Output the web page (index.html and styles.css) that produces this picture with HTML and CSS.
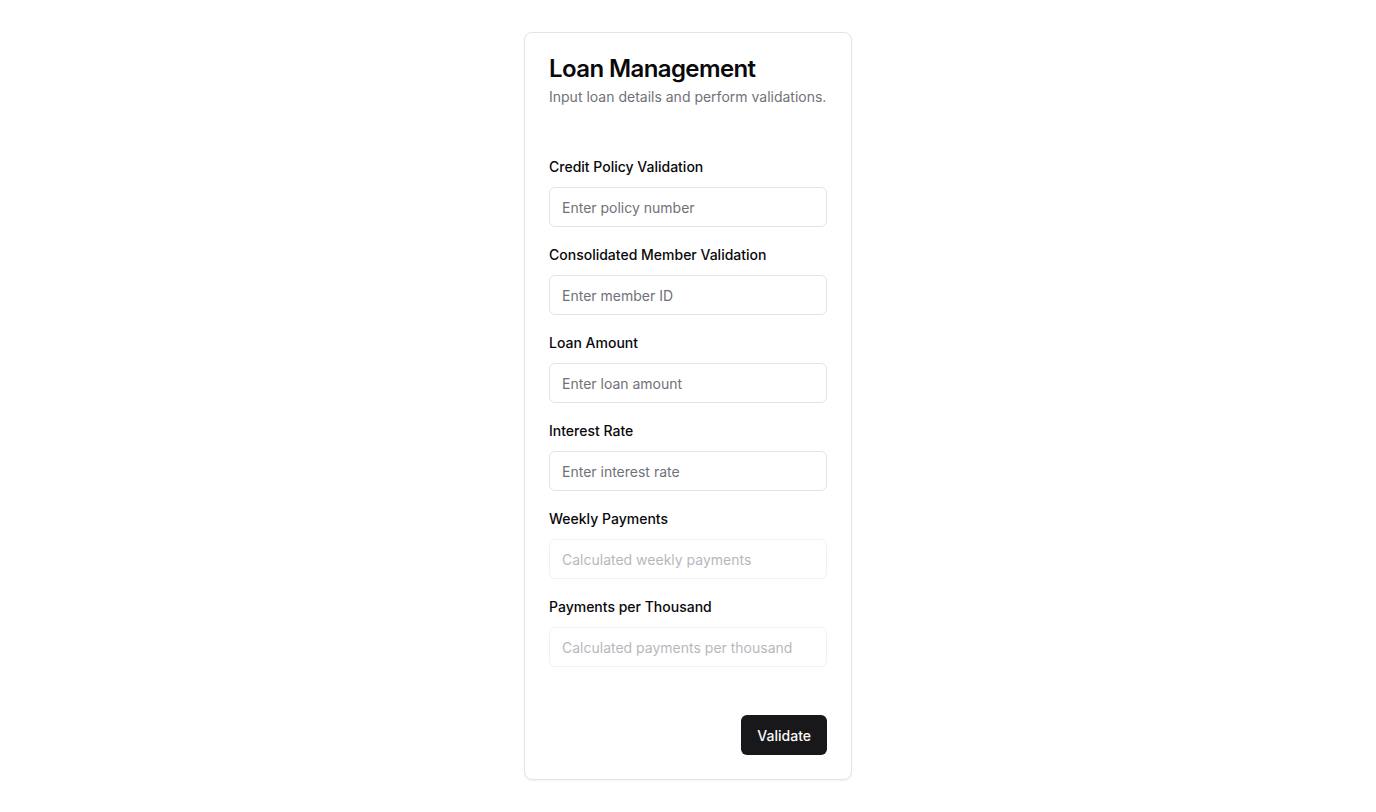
FILE: index.html
```html
<!DOCTYPE html>
<html lang="en">
<head>
<meta charset="utf-8">
<title>Loan Management</title>
<link rel="stylesheet" href="styles.css">
</head>
<body>
<main class="page">
  <section class="card">
    <header class="card-header">
      <h1 class="card-title">Loan Management</h1>
      <p class="card-desc">Input loan details and perform validations.</p>
    </header>
    <div class="card-content">
      <div class="field">
        <label class="label" for="policy">Credit Policy Validation</label>
        <input class="input" id="policy" type="text" placeholder="Enter policy number">
      </div>
      <div class="field">
        <label class="label" for="member">Consolidated Member Validation</label>
        <input class="input" id="member" type="text" placeholder="Enter member ID">
      </div>
      <div class="field">
        <label class="label" for="amount">Loan Amount</label>
        <input class="input" id="amount" type="text" placeholder="Enter loan amount">
      </div>
      <div class="field">
        <label class="label" for="rate">Interest Rate</label>
        <input class="input" id="rate" type="text" placeholder="Enter interest rate">
      </div>
      <div class="field">
        <label class="label" for="weekly">Weekly Payments</label>
        <input class="input" id="weekly" type="text" placeholder="Calculated weekly payments" disabled>
      </div>
      <div class="field">
        <label class="label" for="thousand">Payments per Thousand</label>
        <input class="input" id="thousand" type="text" placeholder="Calculated payments per thousand" disabled>
      </div>
    </div>
    <footer class="card-footer">
      <button class="btn" type="button">Validate</button>
    </footer>
  </section>
</main>
</body>
</html>
```

FILE: styles.css
```css
* { box-sizing: border-box; }
html, body { margin: 0; padding: 0; }
body {
  font-family: Inter, "Noto Sans", "Liberation Sans", sans-serif;
  background: #ffffff;
  color: #09090b;
}
.page {
  min-height: 812px;
  display: flex;
  align-items: center;
  justify-content: center;
}
.card {
  width: 328px;
  border: 1px solid #e4e4e7;
  border-radius: 8px;
  background: #fff;
  box-shadow: 0 1px 2px rgba(0,0,0,0.05);
}
.card-header {
  padding: 24px;
  display: flex;
  flex-direction: column;
  gap: 6px;
}
.card-title {
  margin: 0;
  font-size: 24px;
  line-height: 24px;
  font-weight: 600;
  letter-spacing: -0.6px;
  color: #09090b;
}
.card-desc {
  margin: 0;
  font-size: 14px;
  line-height: 20px;
  color: #71717a;
}
.card-content {
  padding: 26px 24px 24px;
  display: flex;
  flex-direction: column;
  gap: 18px;
}
.field {
  display: flex;
  flex-direction: column;
  gap: 10px;
}
.label {
  font-size: 14px;
  line-height: 20px;
  font-weight: 500;
  color: #09090b;
}
.input {
  height: 40px;
  width: 100%;
  border: 1px solid #e4e4e7;
  border-radius: 6px;
  background: #fff;
  padding: 8px 12px;
  font-family: inherit;
  font-size: 14px;
  color: #09090b;
  outline: none;
}
.input::placeholder { color: #71717a; opacity: 1; }
.input:disabled { opacity: 0.5; cursor: not-allowed; }
.card-footer {
  padding: 24px;
  display: flex;
  justify-content: flex-end;
}
.btn {
  height: 40px;
  padding: 0 16px;
  border: none;
  border-radius: 6px;
  background: #18181b;
  color: #fafafa;
  font-family: inherit;
  font-size: 14px;
  font-weight: 500;
  cursor: pointer;
}
```
